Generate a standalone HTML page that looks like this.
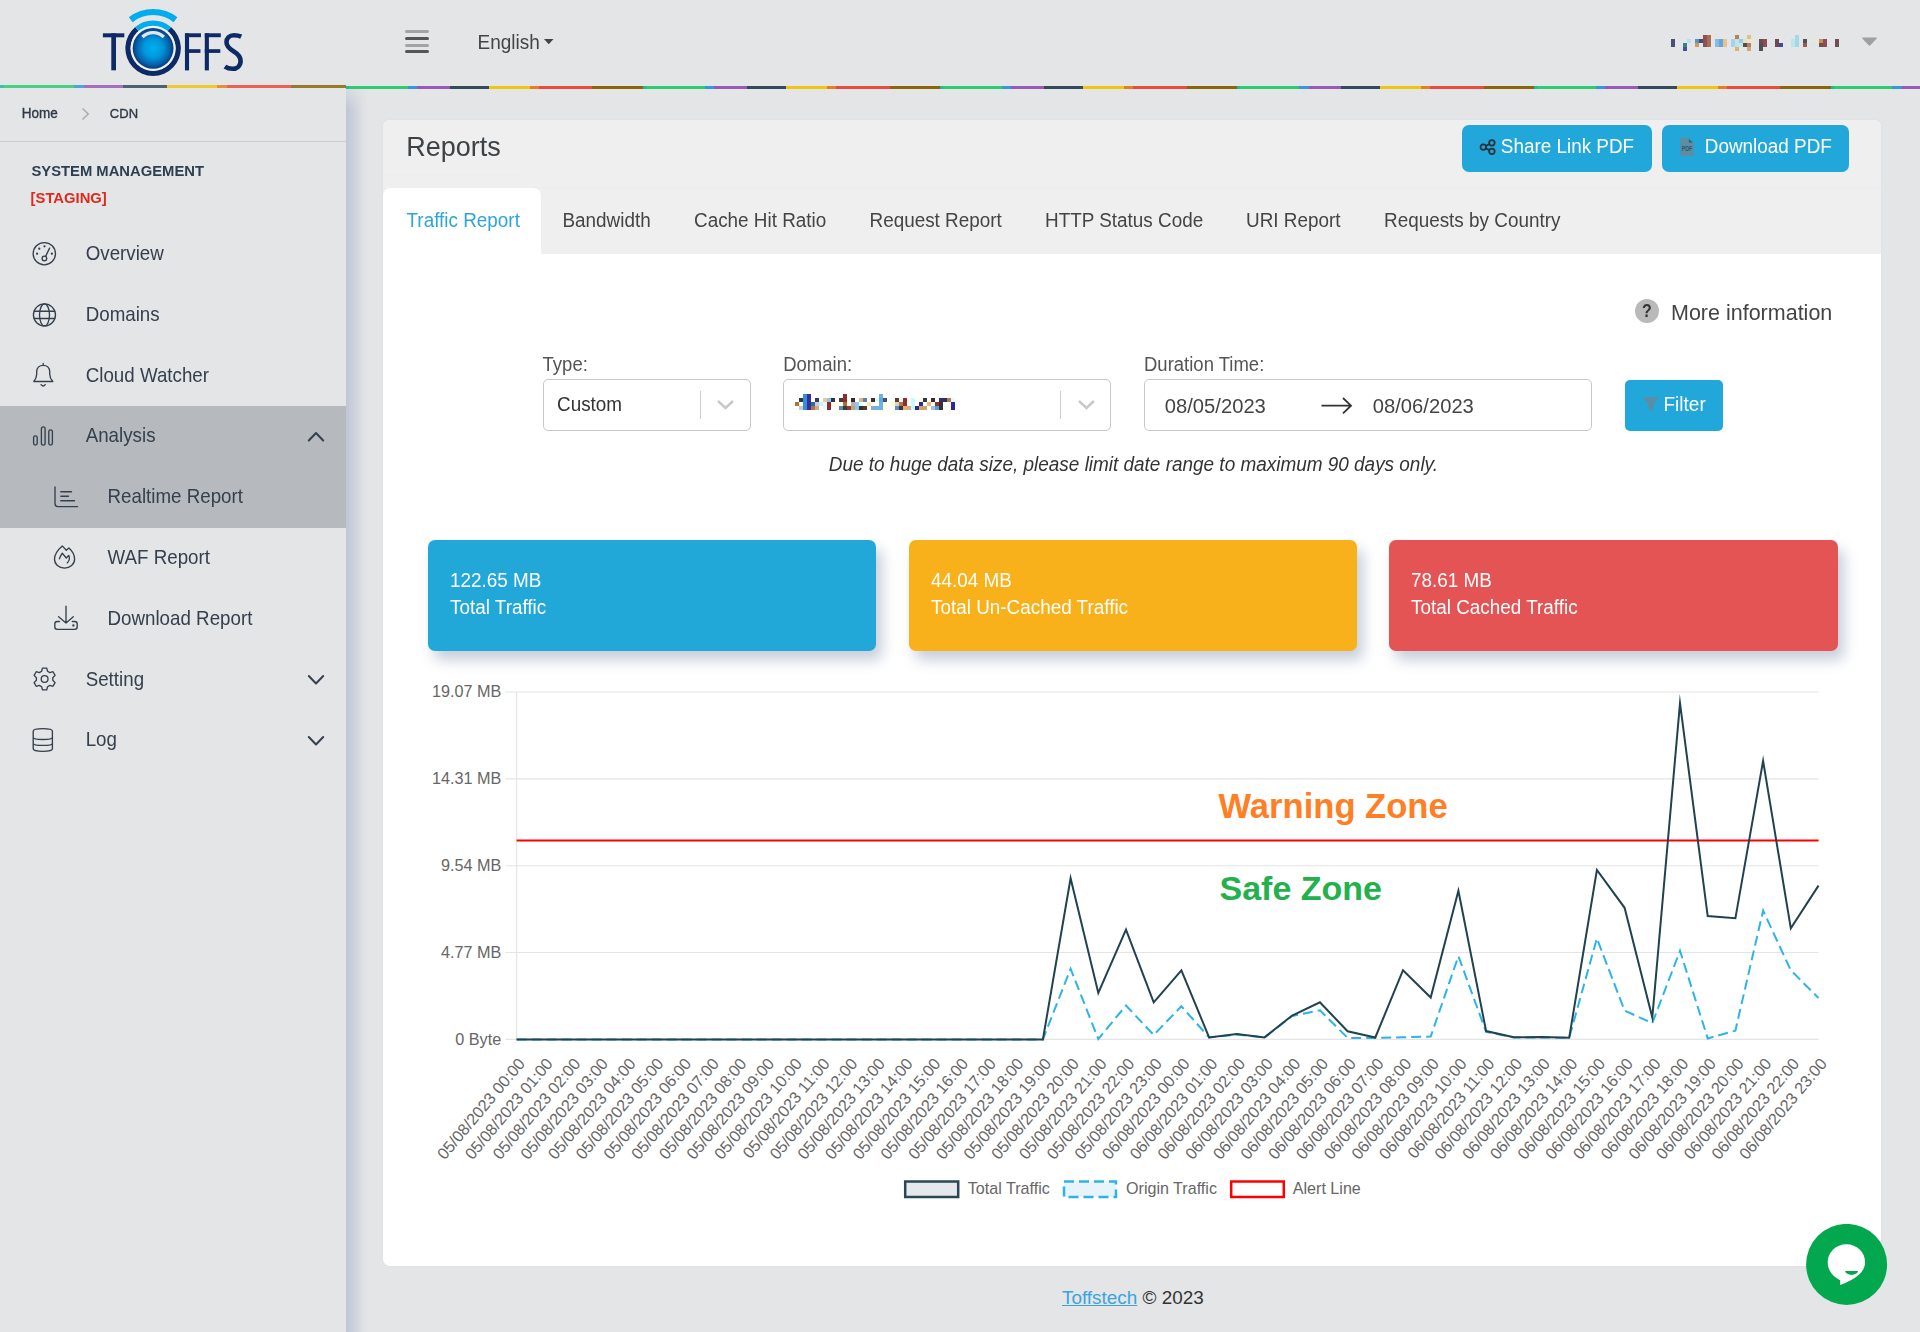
<!DOCTYPE html>
<html><head><meta charset="utf-8"><title>Reports</title>
<style>*{margin:0;padding:0;box-sizing:border-box}
html,body{width:1920px;height:1332px;overflow:hidden;background:#e4e5e7;font-family:"Liberation Sans",sans-serif;color:#333}
.abs{position:absolute}
.t{position:absolute;white-space:nowrap;line-height:1}
#sidebar{position:absolute;left:0;top:88px;width:346px;height:1244px;background:#e4e5e7}
#sbshadow{position:absolute;left:346px;top:89px;width:24px;height:1243px;background:linear-gradient(to right,#bfc5d4 0px,#c6ccd8 4px,#ccd2dc 8px,#d6d9e0 13px,#dfe0e4 17px,#e4e5e7 23px);-webkit-mask-image:linear-gradient(to bottom,rgba(0,0,0,.35) 0,#000 20px)}
.stripeL{position:absolute;left:0;top:85px;width:346px;height:3px}
.stripeR{position:absolute;left:346px;top:86px;width:1574px;height:3px}
.card{position:absolute;left:383px;top:120px;width:1498px;height:1146px;background:#fff;border-radius:7px;overflow:hidden;box-shadow:0 0 3px rgba(0,0,0,.04)}
.cardhead{position:absolute;left:0;top:0;width:1499px;height:134px;background:#efefef}
.menu{position:absolute;left:0;width:346px;height:61px}
.menu .lbl{position:absolute;font-size:18.6px;color:#34404e;white-space:nowrap;line-height:1}
.btn{position:absolute;background:#21a7d9;border-radius:7px;color:#fff}
.stat{position:absolute;top:540px;width:448px;height:111px;border-radius:7px;box-shadow:6px 9px 14px rgba(130,145,175,.45)}
.stat .v,.stat .n{position:absolute;left:22px;color:#fff;font-size:18.4px;line-height:1;white-space:nowrap}
</style></head><body>
<div id="sidebar"></div>
<div id="sbshadow"></div>
<div class="stripeL" style="opacity:.85;background:repeating-linear-gradient(to right,#1abc9c 0.00px 3.75px,#2ecc71 3.75px 73.75px,#3498db 73.75px 83.75px,#9b59b6 83.75px 122.50px,#34495e 122.50px 167.50px,#f1c40f 167.50px 217.50px,#e67e22 217.50px 227.50px,#e74c3c 227.50px 290.75px,#8b6508 290.75px 346.00px)"></div>
<div class="stripeR" style="background:repeating-linear-gradient(to right,#1abc9c 0.00px 3.00px,#2ecc71 3.00px 61.50px,#3498db 61.50px 71.50px,#9b59b6 71.50px 104.00px,#34495e 104.00px 143.00px,#f1c40f 143.00px 184.00px,#e67e22 184.00px 193.00px,#e74c3c 193.00px 246.50px,#8b6508 246.50px 297.00px)"></div>
<svg class="abs" style="left:0;top:0" width="346" height="85" viewBox="0 0 346 85"><defs><radialGradient id="sph" cx="50%" cy="50%" r="50%"><stop offset="0" stop-color="#00b0f0"/><stop offset="0.45" stop-color="#0098dc"/><stop offset="0.8" stop-color="#0862ac"/><stop offset="1" stop-color="#073c7e"/></radialGradient></defs><rect x="102.9" y="33.3" width="21.4" height="4" fill="#0d2a66"/><rect x="111.3" y="33.3" width="4.7" height="37" fill="#0d2a66"/><path d="M170.94,27.04 A27.75,27.75 0 1 1 135.26,27.04 L138.70,31.14 A22.4,22.4 0 1 0 167.50,31.14 Z" fill="#0d2a66"/><path d="M135.26,27.04 A27.75,27.75 0 0 1 170.94,27.04 L167.50,31.14 A22.4,22.4 0 0 0 138.70,31.14 Z" fill="#00adee"/><path d="M128.84,17.25 A39.4,39.4 0 0 1 177.36,17.25 L173.54,22.14 A33.2,33.2 0 0 0 132.66,22.14 Z" fill="#00adee"/><circle cx="153.1" cy="48.3" r="22.6" fill="#eef0f2"/><circle cx="153.1" cy="48.3" r="20.4" fill="url(#sph)"/><path d="M141.22,35.70 A17.1,17.1 0 0 1 164.98,35.70 L162.62,38.15 A13.7,13.7 0 0 0 143.58,38.15 Z" fill="#e2e6ea"/><rect x="184.95" y="33.3" width="4.1" height="37.1" fill="#0d2a66"/><rect x="184.95" y="33.3" width="16.0" height="3.9" fill="#0d2a66"/><rect x="184.95" y="49.2" width="15.5" height="3.7" fill="#0d2a66"/><rect x="204.8" y="33.3" width="4.1" height="37.1" fill="#0d2a66"/><rect x="204.8" y="33.3" width="16.0" height="3.9" fill="#0d2a66"/><rect x="204.8" y="49.2" width="15.5" height="3.7" fill="#0d2a66"/><path d="M241.2,36.6 C238.5,35.3 236.3,35.2 234,35.2 C229.5,35.2 226.5,38.3 226.5,42.3 C226.5,46.5 229.5,48.8 233.5,51.2 C237.8,53.8 240.6,56.3 240.6,61 C240.6,65.8 237,68.8 232.5,68.8 C229.5,68.8 227,68 224.9,66.6" fill="none" stroke="#0d2a66" stroke-width="4.6"/></svg>
<div class="abs" style="left:405px;top:30px;width:23.5px;height:3.2px;border-radius:2px;background:#a3a3a3"></div>
<div class="abs" style="left:405px;top:36.8px;width:23.5px;height:3.2px;border-radius:2px;background:#555"></div>
<div class="abs" style="left:405px;top:43.6px;width:23.5px;height:3.2px;border-radius:2px;background:#a3a3a3"></div>
<div class="abs" style="left:405px;top:50.2px;width:23.5px;height:3.2px;border-radius:2px;background:#555"></div>
<div class="t" style="left:477.50px;top:32.52px;font-size:19px;transform:scaleY(1.045);transform-origin:0 16.08px;color:#444">English</div>
<svg class="abs" style="left:543px;top:38px" width="12" height="8"><path d="M1,1 L10.5,1 L5.75,6.2 Z" fill="#444"/></svg>
<svg class="abs" style="left:1671px;top:35px" width="170" height="16"><rect x="0" y="4" width="4" height="4" fill="#4a4f7a"/><rect x="0" y="8" width="4" height="4" fill="#4a4f7a"/><rect x="12" y="8" width="4" height="4" fill="#3f8080"/><rect x="12" y="12" width="4" height="4" fill="#46519a"/><rect x="16" y="4" width="4" height="4" fill="#b5e3ea"/><rect x="24" y="4" width="4" height="4" fill="#4d95d5"/><rect x="24" y="8" width="4" height="4" fill="#d39a50"/><rect x="28" y="4" width="4" height="4" fill="#4b4e5a"/><rect x="28" y="8" width="4" height="4" fill="#dde9ea"/><rect x="32" y="0" width="4" height="4" fill="#8e4f55"/><rect x="32" y="4" width="4" height="4" fill="#8e4f55"/><rect x="32" y="8" width="4" height="4" fill="#8e4f55"/><rect x="36" y="0" width="4" height="4" fill="#a8704f"/><rect x="36" y="4" width="4" height="4" fill="#a8704f"/><rect x="36" y="8" width="4" height="4" fill="#a8704f"/><rect x="44" y="4" width="4" height="4" fill="#86bbe9"/><rect x="44" y="8" width="4" height="4" fill="#86bbe9"/><rect x="48" y="4" width="4" height="4" fill="#64a5dc"/><rect x="48" y="8" width="4" height="4" fill="#64a5dc"/><rect x="52" y="4" width="4" height="4" fill="#e8c08f"/><rect x="52" y="8" width="4" height="4" fill="#e8c08f"/><rect x="60" y="4" width="4" height="4" fill="#a5d3ea"/><rect x="60" y="8" width="4" height="4" fill="#a5d3ea"/><rect x="64" y="0" width="4" height="4" fill="#b98255"/><rect x="64" y="4" width="4" height="4" fill="#bde5e6"/><rect x="64" y="8" width="4" height="4" fill="#bde5e6"/><rect x="64" y="12" width="4" height="4" fill="#ddb07c"/><rect x="68" y="4" width="4" height="4" fill="#96cbee"/><rect x="68" y="8" width="4" height="4" fill="#c5e5e8"/><rect x="72" y="4" width="4" height="4" fill="#e9e3bd"/><rect x="72" y="8" width="4" height="4" fill="#5a4c4e"/><rect x="76" y="0" width="4" height="4" fill="#e3be8c"/><rect x="76" y="8" width="4" height="4" fill="#b0825a"/><rect x="76" y="12" width="4" height="4" fill="#d1a87c"/><rect x="80" y="4" width="4" height="4" fill="#ebe8cf"/><rect x="88" y="4" width="4" height="4" fill="#6f4a50"/><rect x="88" y="8" width="4" height="4" fill="#4d5156"/><rect x="88" y="12" width="4" height="4" fill="#4d5156"/><rect x="92" y="4" width="4" height="4" fill="#8c4e55"/><rect x="92" y="8" width="4" height="4" fill="#8c4e55"/><rect x="104" y="4" width="4" height="4" fill="#6d4a4f"/><rect x="104" y="8" width="4" height="4" fill="#6d4a4f"/><rect x="108" y="8" width="4" height="4" fill="#46499a"/><rect x="116" y="8" width="4" height="4" fill="#dfeaea"/><rect x="120" y="4" width="4" height="4" fill="#bde6e6"/><rect x="120" y="8" width="4" height="4" fill="#bde6e6"/><rect x="124" y="0" width="4" height="4" fill="#a6d6ea"/><rect x="124" y="4" width="4" height="4" fill="#a6d6ea"/><rect x="124" y="8" width="4" height="4" fill="#a6d6ea"/><rect x="132" y="4" width="4" height="4" fill="#545053"/><rect x="132" y="8" width="4" height="4" fill="#9c5b4d"/><rect x="140" y="4" width="4" height="4" fill="#e9e8cd"/><rect x="140" y="8" width="4" height="4" fill="#d8e8e8"/><rect x="148" y="4" width="4" height="4" fill="#c98f4f"/><rect x="148" y="8" width="4" height="4" fill="#734e55"/><rect x="152" y="4" width="4" height="4" fill="#8e4d55"/><rect x="152" y="8" width="4" height="4" fill="#8e4d55"/><rect x="164" y="4" width="4" height="4" fill="#724d52"/><rect x="164" y="8" width="4" height="4" fill="#724d52"/></svg>
<svg class="abs" style="left:1860px;top:36px" width="19" height="12"><path d="M3,1.5 L16,1.5 Q17.5,1.5 16.5,2.8 L10.6,9 Q9.5,10 8.4,9 L2.5,2.8 Q1.5,1.5 3,1.5 Z" fill="#9fa0a0"/></svg>
<div class="t" style="left:21.70px;top:107.07px;font-size:13.5px;transform:scaleY(1.045);transform-origin:0 11.43px;color:#2e3a48;-webkit-text-stroke:.35px #2e3a48">Home</div>
<svg class="abs" style="left:80px;top:106px" width="12" height="15"><path d="M2.5,2.5 L8.2,8 L2.5,13.5" fill="none" stroke="#a9a9a9" stroke-width="1.4"/></svg>
<div class="t" style="left:109.80px;top:106.90px;font-size:13.0px;transform:scaleY(1.045);transform-origin:0 11.00px;color:#2e3a48;-webkit-text-stroke:.35px #2e3a48;letter-spacing:.1px">CDN</div>
<div class="abs" style="left:0px;top:141px;width:346px;height:1.2px;background:#cbcccf"></div>
<div class="t" style="left:31.40px;top:164.47px;font-size:14.8px;transform:scaleY(1.045);transform-origin:0 12.53px;color:#2c3e50;font-weight:bold">SYSTEM MANAGEMENT</div>
<div class="t" style="left:30.60px;top:191.47px;font-size:14.8px;transform:scaleY(1.045);transform-origin:0 12.53px;color:#e0281b;font-weight:bold">[STAGING]</div>
<div class="abs" style="left:0px;top:406px;width:346px;height:122px;background:#b6babe"></div>
<svg class="abs" style="left:0;top:0;overflow:visible" width="346" height="1332"><g fill="none" stroke="#34404e" stroke-width="1.35" stroke-linecap="round" stroke-linejoin="round"><circle cx="44.3" cy="253.7" r="11.15"/><circle cx="39.3" cy="248.7" r="0.55" fill="#34404e" stroke-width="1.1"/><circle cx="44.5" cy="246.3" r="0.55" fill="#34404e" stroke-width="1.1"/><circle cx="37.1" cy="253.7" r="0.55" fill="#34404e" stroke-width="1.1"/><circle cx="51.9" cy="253.7" r="0.55" fill="#34404e" stroke-width="1.1"/><circle cx="44.4" cy="258.4" r="2.3"/><path d="M45.6,256.4 L49.6,248.1"/><circle cx="44.45" cy="314.9" r="11.0"/><ellipse cx="44.5" cy="314.9" rx="5.0" ry="11.0"/><path d="M34.2,311.2 H54.8 M34.2,318.5 H54.8"/><path d="M33.8,381.5 L52.8,381.5 C51.6,380.2 49.7,378 49.7,374 L49.7,371.6 C49.7,367.8 46.9,365.3 43.2,365.3 C39.5,365.3 36.7,367.8 36.7,371.6 L36.7,374 C36.7,378 34.9,380.2 33.8,381.5 Z M43.2,363.3 V365.2 M41.1,384.6 Q43.1,387.4 45.2,384.6"/><rect x="33.6" y="435.8" width="3.6" height="9.3" rx="1.8"/><rect x="41.4" y="426.8" width="3.7" height="18.3" rx="1.85"/><rect x="48.8" y="429.8" width="3.6" height="15.3" rx="1.8"/><path d="M55,487 V503.8 Q55,506.6 57.8,506.6 H77.6 M60.8,491.7 H71.5 M60.8,496.2 H68.5 M60.8,500.7 H74.5"/><path d="M62.25,545.9 L66.3,550.2 L68.9,547.9 C72.4,551 74.6,555 74.6,559 C74.6,564.4 70,568.1 64.5,568.1 C58.8,568.1 54.5,564.4 54.5,559 C54.5,553.8 58,549.6 62.25,545.9 Z M59.4,558.8 C60.2,556.6 61,554.8 62.3,553.2 L66.3,558 L68.7,555.4 C69.9,557.9 69.6,560.6 67.3,562.9"/><path d="M66,606.2 V622.8 M58.6,616.8 L66,623 L73.3,616.8 M59.5,621.5 H57.2 Q54.8,621.5 54.8,624 V626.8 Q54.8,629.3 57.2,629.3 H74.8 Q77.2,629.3 77.2,626.8 V624 Q77.2,621.5 74.8,621.5 H72.3"/><circle cx="73.4" cy="625.4" r="0.5" fill="#34404e"/><path d="M41.63,671.25 L42.48,668.10 L46.72,668.10 L47.57,671.25 L49.82,672.55 L52.98,671.72 L55.10,675.39 L52.80,677.70 L52.80,680.30 L55.10,682.61 L52.98,686.28 L49.82,685.45 L47.57,686.75 L46.72,689.90 L42.48,689.90 L41.63,686.75 L39.38,685.45 L36.22,686.28 L34.10,682.61 L36.40,680.30 L36.40,677.70 L34.10,675.39 L36.22,671.72 L39.38,672.55 Z"/><circle cx="44.6" cy="679.0" r="3.4"/><path d="M33.2,731.2 C33.2,729.5 37.5,728.6 42.8,728.6 C48.1,728.6 52.4,729.5 52.4,731.2 V748.8 C52.4,750.5 48.1,751.3 42.8,751.3 C37.5,751.3 33.2,750.5 33.2,748.8 Z M33.2,737.2 C33.2,738.8 37.5,739.5 42.8,739.5 C48.1,739.5 52.4,738.8 52.4,737.2 M33.2,743.2 C33.2,744.8 37.5,745.4 42.8,745.4 C48.1,745.4 52.4,744.8 52.4,743.2"/></g></svg>
<svg class="abs" style="left:0;top:0;overflow:visible" width="346" height="1332"><g fill="none" stroke="#34404e" stroke-width="2" stroke-linecap="round" stroke-linejoin="round"><path d="M308.8,440.5 L316,433 L323.2,440.5"/><path d="M308.8,676 L316,683.5 L323.2,676"/><path d="M308.8,737 L316,744.5 L323.2,737"/></g></svg>
<div class="t" style="left:85.70px;top:245.03px;font-size:18.75px;transform:scaleY(1.045);transform-origin:0 15.87px;color:#34404e">Overview</div>
<div class="t" style="left:85.70px;top:305.83px;font-size:18.75px;transform:scaleY(1.045);transform-origin:0 15.87px;color:#34404e">Domains</div>
<div class="t" style="left:85.70px;top:366.63px;font-size:18.75px;transform:scaleY(1.045);transform-origin:0 15.87px;color:#34404e">Cloud Watcher</div>
<div class="t" style="left:85.70px;top:427.43px;font-size:18.75px;transform:scaleY(1.045);transform-origin:0 15.87px;color:#34404e">Analysis</div>
<div class="t" style="left:107.50px;top:488.23px;font-size:18.75px;transform:scaleY(1.045);transform-origin:0 15.87px;color:#34404e">Realtime Report</div>
<div class="t" style="left:107.50px;top:549.03px;font-size:18.75px;transform:scaleY(1.045);transform-origin:0 15.87px;color:#34404e">WAF Report</div>
<div class="t" style="left:107.50px;top:609.83px;font-size:18.75px;transform:scaleY(1.045);transform-origin:0 15.87px;color:#34404e">Download Report</div>
<div class="t" style="left:85.70px;top:670.63px;font-size:18.75px;transform:scaleY(1.045);transform-origin:0 15.87px;color:#34404e">Setting</div>
<div class="t" style="left:85.70px;top:731.43px;font-size:18.75px;transform:scaleY(1.045);transform-origin:0 15.87px;color:#34404e">Log</div>
<div class="card"><div class="cardhead"></div></div>
<div class="abs" style="left:383px;top:175px;width:139px;height:1px;background:#ebeeef"></div>
<div class="abs" style="left:534px;top:187px;width:1348px;height:1px;background:#eaedf1"></div>
<div class="abs" style="left:383px;top:188px;width:158px;height:70px;background:#fff;border-radius:8px 8px 0 0"></div>
<div class="t" style="left:406.30px;top:134.44px;font-size:27px;transform:scaleY(1.045);transform-origin:0 22.86px;color:#3d4246">Reports</div>
<div class="t" style="left:406.50px;top:211.60px;font-size:18.9px;transform:scaleY(1.045);transform-origin:0 16.00px;color:#2ea5da">Traffic Report</div>
<div class="t" style="left:562.50px;top:211.60px;font-size:18.9px;transform:scaleY(1.045);transform-origin:0 16.00px;color:#444">Bandwidth</div>
<div class="t" style="left:694.00px;top:211.60px;font-size:18.9px;transform:scaleY(1.045);transform-origin:0 16.00px;color:#444">Cache Hit Ratio</div>
<div class="t" style="left:869.50px;top:211.60px;font-size:18.9px;transform:scaleY(1.045);transform-origin:0 16.00px;color:#444">Request Report</div>
<div class="t" style="left:1045.00px;top:211.60px;font-size:18.9px;transform:scaleY(1.045);transform-origin:0 16.00px;color:#444">HTTP Status Code</div>
<div class="t" style="left:1246.00px;top:211.60px;font-size:18.9px;transform:scaleY(1.045);transform-origin:0 16.00px;color:#444">URI Report</div>
<div class="t" style="left:1384.00px;top:211.60px;font-size:18.9px;transform:scaleY(1.045);transform-origin:0 16.00px;color:#444">Requests by Country</div>
<div class="btn" style="left:1462px;top:125px;width:190px;height:47px"></div>
<div class="btn" style="left:1662px;top:125px;width:187px;height:47px"></div>
<div class="t" style="left:1500.80px;top:137.80px;font-size:18.9px;transform:scaleY(1.045);transform-origin:0 16.00px;color:#fff">Share Link PDF</div>
<div class="t" style="left:1704.80px;top:137.80px;font-size:18.9px;transform:scaleY(1.045);transform-origin:0 16.00px;color:#fff">Download PDF</div>
<svg class="abs" style="left:1476px;top:136px;overflow:visible" width="24" height="22"><g fill="none" stroke="#2b3138" stroke-width="1.75"><circle cx="7.3" cy="11.1" r="2.75"/><circle cx="15.9" cy="6.8" r="2.75"/><circle cx="15.9" cy="15.3" r="2.75"/><path d="M9.8,9.9 L13.4,8 M9.8,12.4 L13.4,14.1"/></g></svg>
<svg class="abs" style="left:1679px;top:136px" width="17" height="21"><path d="M2.6,1.4 H9.1 L14.8,7.4 V18.3 Q14.8,19.9 13.2,19.9 H2.7 Q1.1,19.9 1.1,18.3 V3 Q1.1,1.4 2.6,1.4 Z" fill="#5a8ea5"/><path d="M9.9,3.2 L13.9,6.6 H9.9 Z" fill="#3b5a68"/><text x="0" y="0" transform="translate(8,15.2) scale(.72,1)" font-family="Liberation Sans" font-size="7.4" font-weight="bold" fill="#33546a" text-anchor="middle">PDF</text></svg>
<div class="abs" style="left:1635px;top:299px;width:24px;height:24px;border-radius:50%;background:#b9b9b9"></div>
<div class="t" style="left:1641.80px;top:303.13px;font-size:17.8px;color:#333;font-weight:bold;transform:scaleX(.9);transform-origin:left">?</div>
<div class="t" style="left:1671.00px;top:302.60px;font-size:21.5px;transform:scaleY(1.045);transform-origin:0 18.20px;color:#444">More information</div>
<div class="t" style="left:542.60px;top:355.64px;font-size:18.5px;transform:scaleY(1.045);transform-origin:0 15.66px;color:#555">Type:</div>
<div class="t" style="left:783.20px;top:355.64px;font-size:18.5px;transform:scaleY(1.045);transform-origin:0 15.66px;color:#555">Domain:</div>
<div class="t" style="left:1144.00px;top:355.64px;font-size:18.5px;transform:scaleY(1.045);transform-origin:0 15.66px;color:#555">Duration Time:</div>
<div class="abs" style="left:543px;top:379px;width:208px;height:52px;border:1px solid #c8c8c8;border-radius:5px;background:#fff"></div>
<div class="t" style="left:557.00px;top:396.20px;font-size:18.9px;transform:scaleY(1.045);transform-origin:0 16.00px;color:#333">Custom</div>
<div class="abs" style="left:700px;top:391px;width:1.3px;height:28px;background:#ccc"></div>
<svg class="abs" style="left:714px;top:398px" width="24" height="14"><path d="M4,3 L11.5,10 L19,3" fill="none" stroke="#c8c8c8" stroke-width="2.4"/></svg>
<div class="abs" style="left:783px;top:379px;width:328px;height:52px;border:1px solid #c8c8c8;border-radius:5px;background:#fff"></div>
<div class="abs" style="left:1060px;top:391px;width:1.3px;height:28px;background:#ccc"></div>
<svg class="abs" style="left:1075px;top:398px" width="24" height="14"><path d="M4,3 L11.5,10 L19,3" fill="none" stroke="#c8c8c8" stroke-width="2.4"/></svg>
<svg class="abs" style="left:795px;top:394px" width="160" height="16"><rect x="0" y="8" width="4" height="4" fill="#b8702f"/><rect x="4" y="4" width="4" height="4" fill="#35353d"/><rect x="4" y="12" width="4" height="4" fill="#c9cac5"/><rect x="8" y="0" width="4" height="4" fill="#3290d6"/><rect x="8" y="4" width="4" height="4" fill="#3290d6"/><rect x="8" y="8" width="4" height="4" fill="#3290d6"/><rect x="8" y="12" width="4" height="4" fill="#3290d6"/><rect x="12" y="0" width="4" height="4" fill="#353099"/><rect x="12" y="4" width="4" height="4" fill="#353099"/><rect x="12" y="8" width="4" height="4" fill="#353099"/><rect x="12" y="12" width="4" height="4" fill="#353099"/><rect x="16" y="8" width="4" height="4" fill="#2f6aa8"/><rect x="16" y="12" width="4" height="4" fill="#b8703a"/><rect x="20" y="4" width="4" height="4" fill="#2d3f58"/><rect x="20" y="8" width="4" height="4" fill="#cfcdd2"/><rect x="20" y="12" width="4" height="4" fill="#c8ad8f"/><rect x="24" y="8" width="4" height="4" fill="#c2f6fa"/><rect x="28" y="4" width="4" height="4" fill="#edc89a"/><rect x="28" y="8" width="4" height="4" fill="#e5fbfd"/><rect x="28" y="12" width="4" height="4" fill="#e5fbfd"/><rect x="32" y="4" width="4" height="4" fill="#8dc3ec"/><rect x="32" y="8" width="4" height="4" fill="#8f2a2a"/><rect x="32" y="12" width="4" height="4" fill="#8f2a2a"/><rect x="36" y="4" width="4" height="4" fill="#333536"/><rect x="40" y="8" width="4" height="4" fill="#fffde6"/><rect x="44" y="4" width="4" height="4" fill="#4d3a2d"/><rect x="44" y="12" width="4" height="4" fill="#5a8ab8"/><rect x="48" y="0" width="4" height="4" fill="#902b2e"/><rect x="48" y="4" width="4" height="4" fill="#902b2e"/><rect x="48" y="8" width="4" height="4" fill="#b86a2a"/><rect x="48" y="12" width="4" height="4" fill="#33403a"/><rect x="52" y="12" width="4" height="4" fill="#973833"/><rect x="56" y="4" width="4" height="4" fill="#2c2e30"/><rect x="56" y="8" width="4" height="4" fill="#c4ada0"/><rect x="56" y="12" width="4" height="4" fill="#b5a886"/><rect x="60" y="8" width="4" height="4" fill="#8fc9f3"/><rect x="60" y="12" width="4" height="4" fill="#89c4f2"/><rect x="64" y="4" width="4" height="4" fill="#dcb587"/><rect x="64" y="8" width="4" height="4" fill="#e6fdfd"/><rect x="64" y="12" width="4" height="4" fill="#2d3038"/><rect x="68" y="4" width="4" height="4" fill="#5f7fb0"/><rect x="68" y="12" width="4" height="4" fill="#5b3828"/><rect x="72" y="8" width="4" height="4" fill="#fde5aa"/><rect x="76" y="4" width="4" height="4" fill="#3d3128"/><rect x="76" y="12" width="4" height="4" fill="#8eaac2"/><rect x="80" y="4" width="4" height="4" fill="#ecfcff"/><rect x="80" y="12" width="4" height="4" fill="#6cb1ee"/><rect x="84" y="0" width="4" height="4" fill="#6cb0ee"/><rect x="84" y="4" width="4" height="4" fill="#63a6d8"/><rect x="84" y="8" width="4" height="4" fill="#6cb0ee"/><rect x="84" y="12" width="4" height="4" fill="#6cb0ee"/><rect x="88" y="4" width="4" height="4" fill="#3d5480"/><rect x="88" y="8" width="4" height="4" fill="#fffde0"/><rect x="88" y="12" width="4" height="4" fill="#fffde0"/><rect x="96" y="8" width="4" height="4" fill="#fffbc5"/><rect x="100" y="4" width="4" height="4" fill="#5e3a29"/><rect x="100" y="8" width="4" height="4" fill="#d4d2d6"/><rect x="100" y="12" width="4" height="4" fill="#5d8cb5"/><rect x="104" y="4" width="4" height="4" fill="#e5fbff"/><rect x="104" y="8" width="4" height="4" fill="#b27d32"/><rect x="104" y="12" width="4" height="4" fill="#31345a"/><rect x="108" y="4" width="4" height="4" fill="#962c2e"/><rect x="108" y="8" width="4" height="4" fill="#962c2e"/><rect x="108" y="12" width="4" height="4" fill="#eab064"/><rect x="112" y="12" width="4" height="4" fill="#cdb08b"/><rect x="116" y="4" width="4" height="4" fill="#c9fbfc"/><rect x="116" y="8" width="4" height="4" fill="#c9fbfc"/><rect x="116" y="12" width="4" height="4" fill="#c9fbfc"/><rect x="120" y="12" width="4" height="4" fill="#2a2a98"/><rect x="124" y="4" width="4" height="4" fill="#fff9ea"/><rect x="124" y="8" width="4" height="4" fill="#2f2c9a"/><rect x="124" y="12" width="4" height="4" fill="#de9b5b"/><rect x="128" y="4" width="4" height="4" fill="#2c3a46"/><rect x="128" y="12" width="4" height="4" fill="#c0a47a"/><rect x="132" y="8" width="4" height="4" fill="#f0b56b"/><rect x="136" y="4" width="4" height="4" fill="#3b2a2a"/><rect x="136" y="12" width="4" height="4" fill="#a6c0d8"/><rect x="140" y="8" width="4" height="4" fill="#972d2d"/><rect x="140" y="12" width="4" height="4" fill="#4c9ee6"/><rect x="144" y="4" width="4" height="4" fill="#2f2b7a"/><rect x="144" y="8" width="4" height="4" fill="#333333"/><rect x="144" y="12" width="4" height="4" fill="#333333"/><rect x="148" y="4" width="4" height="4" fill="#2f3348"/><rect x="152" y="4" width="4" height="4" fill="#b07a5a"/><rect x="156" y="4" width="4" height="4" fill="#e5fcff"/><rect x="156" y="8" width="4" height="4" fill="#2d2a95"/><rect x="156" y="12" width="4" height="4" fill="#2d2a95"/></svg>
<div class="abs" style="left:1144px;top:379px;width:448px;height:52px;border:1px solid #c8c8c8;border-radius:5px;background:#fff"></div>
<div class="t" style="left:1164.80px;top:396.10px;font-size:20.2px;transform:scaleY(1.045);transform-origin:0 17.10px;color:#444">08/05/2023</div>
<div class="t" style="left:1372.80px;top:396.10px;font-size:20.2px;transform:scaleY(1.045);transform-origin:0 17.10px;color:#444">08/06/2023</div>
<svg class="abs" style="left:1318px;top:394px" width="38" height="24"><path d="M3.5,11.7 H33 M25,4 L33,11.7 L25,19.4" fill="none" stroke="#333" stroke-width="1.8"/></svg>
<div class="btn" style="left:1625px;top:380px;width:98px;height:51px;border-radius:5px"></div>
<svg class="abs" style="left:1641.5px;top:395.5px" width="20" height="17"><path d="M1.2,2.2 Q0.6,1 2,1 H15.6 Q17,1 16.4,2.2 L11.2,8.6 V14.6 Q11.2,15.8 10.2,15.2 L7.4,13.2 Q6.4,12.5 6.4,11.6 V8.6 Z" fill="#5b8ea5"/></svg>
<div class="t" style="left:1663.50px;top:395.22px;font-size:19px;transform:scaleY(1.045);transform-origin:0 16.08px;color:#fff">Filter</div>
<div class="t" style="left:828.80px;top:456.46px;font-size:18.95px;transform:scaleY(1.045);transform-origin:0 16.04px;color:#333;font-style:italic">Due to huge data size, please limit date range to maximum 90 days only.</div>
<div class="stat" style="left:428px;background:#22a7d9;width:448px"></div>
<div class="t" style="left:450.00px;top:571.60px;font-size:18.9px;transform:scaleY(1.045);transform-origin:0 16.00px;color:#fff">122.65 MB</div>
<div class="t" style="left:450.00px;top:599.40px;font-size:18.9px;transform:scaleY(1.045);transform-origin:0 16.00px;color:#fff">Total Traffic</div>
<div class="stat" style="left:909px;background:#f8b11a;width:448px"></div>
<div class="t" style="left:931.00px;top:571.60px;font-size:18.9px;transform:scaleY(1.045);transform-origin:0 16.00px;color:#fff">44.04 MB</div>
<div class="t" style="left:931.00px;top:599.40px;font-size:18.9px;transform:scaleY(1.045);transform-origin:0 16.00px;color:#fff">Total Un-Cached Traffic</div>
<div class="stat" style="left:1389px;background:#e45454;width:449px"></div>
<div class="t" style="left:1411.00px;top:571.60px;font-size:18.9px;transform:scaleY(1.045);transform-origin:0 16.00px;color:#fff">78.61 MB</div>
<div class="t" style="left:1411.00px;top:599.40px;font-size:18.9px;transform:scaleY(1.045);transform-origin:0 16.00px;color:#fff">Total Cached Traffic</div>
<svg class="abs" style="left:0;top:0;overflow:visible;font-family:'Liberation Sans',sans-serif" width="1920" height="1332"><path d="M505.5,692.00 H1818.6" stroke="#e4e4e4" stroke-width="1.1"/><path d="M505.5,778.85 H1818.6" stroke="#e4e4e4" stroke-width="1.1"/><path d="M505.5,865.70 H1818.6" stroke="#e4e4e4" stroke-width="1.1"/><path d="M505.5,952.55 H1818.6" stroke="#e4e4e4" stroke-width="1.1"/><path d="M505.5,1039.40 H1818.6" stroke="#e4e4e4" stroke-width="1.1"/><path d="M516.6,692.0 V1039.4" stroke="#e4e4e4" stroke-width="1.1"/><text x="501.2" y="697.30" text-anchor="end" font-size="16.2" fill="#666">19.07 MB</text><text x="501.2" y="784.15" text-anchor="end" font-size="16.2" fill="#666">14.31 MB</text><text x="501.2" y="871.00" text-anchor="end" font-size="16.2" fill="#666">9.54 MB</text><text x="501.2" y="957.85" text-anchor="end" font-size="16.2" fill="#666">4.77 MB</text><text x="501.2" y="1044.70" text-anchor="end" font-size="16.2" fill="#666">0 Byte</text><path d="M516.6,840.6 H1818.6" stroke="#ff0000" stroke-width="2"/><text x="1218.5" y="817.8" font-size="34.6" font-weight="bold" fill="#ff7f27">Warning Zone</text><text x="1219.5" y="899.5" font-size="34" font-weight="bold" fill="#22b14c">Safe Zone</text><polyline points="516.60,1039.40 544.30,1039.40 572.00,1039.40 599.70,1039.40 627.40,1039.40 655.10,1039.40 682.80,1039.40 710.50,1039.40 738.20,1039.40 765.90,1039.40 793.60,1039.40 821.30,1039.40 849.00,1039.40 876.70,1039.40 904.40,1039.40 932.10,1039.40 959.80,1039.40 987.50,1039.40 1015.20,1039.40 1042.90,1039.40 1070.60,968.75 1098.30,1039.00 1126.00,1005.50 1153.70,1035.00 1181.40,1006.25 1209.10,1037.40 1236.80,1034.50 1264.50,1037.50 1292.20,1016.00 1319.90,1010.30 1347.60,1037.90 1375.30,1037.90 1403.00,1037.30 1430.70,1036.60 1458.40,956.20 1486.10,1031.90 1513.80,1037.50 1541.50,1037.50 1569.20,1037.80 1596.90,938.40 1624.60,1010.60 1652.30,1023.10 1680.00,950.80 1707.70,1038.40 1735.40,1030.60 1763.10,910.60 1790.80,970.30 1818.50,998.00" fill="none" stroke="#2db3ea" stroke-width="2" stroke-dasharray="10 5"/><polyline points="516.60,1039.40 544.30,1039.40 572.00,1039.40 599.70,1039.40 627.40,1039.40 655.10,1039.40 682.80,1039.40 710.50,1039.40 738.20,1039.40 765.90,1039.40 793.60,1039.40 821.30,1039.40 849.00,1039.40 876.70,1039.40 904.40,1039.40 932.10,1039.40 959.80,1039.40 987.50,1039.40 1015.20,1039.40 1042.90,1039.40 1070.60,878.30 1098.30,993.00 1126.00,929.70 1153.70,1002.30 1181.40,970.30 1209.10,1037.40 1236.80,1034.00 1264.50,1037.40 1292.20,1015.50 1319.90,1002.30 1347.60,1031.30 1375.30,1037.50 1403.00,970.20 1430.70,997.50 1458.40,890.80 1486.10,1031.10 1513.80,1037.30 1541.50,1037.00 1569.20,1037.80 1596.90,870.00 1624.60,907.80 1652.30,1017.50 1680.00,703.20 1707.70,916.10 1735.40,918.30 1763.10,760.90 1790.80,928.40 1818.50,885.60" fill="none" stroke="#21424f" stroke-width="2" stroke-linejoin="miter" stroke-miterlimit="10"/><text transform="translate(525.80,1064) rotate(-50)" text-anchor="end" font-size="16.2" fill="#666">05/08/2023 00:00</text><text transform="translate(553.50,1064) rotate(-50)" text-anchor="end" font-size="16.2" fill="#666">05/08/2023 01:00</text><text transform="translate(581.20,1064) rotate(-50)" text-anchor="end" font-size="16.2" fill="#666">05/08/2023 02:00</text><text transform="translate(608.90,1064) rotate(-50)" text-anchor="end" font-size="16.2" fill="#666">05/08/2023 03:00</text><text transform="translate(636.60,1064) rotate(-50)" text-anchor="end" font-size="16.2" fill="#666">05/08/2023 04:00</text><text transform="translate(664.30,1064) rotate(-50)" text-anchor="end" font-size="16.2" fill="#666">05/08/2023 05:00</text><text transform="translate(692.00,1064) rotate(-50)" text-anchor="end" font-size="16.2" fill="#666">05/08/2023 06:00</text><text transform="translate(719.70,1064) rotate(-50)" text-anchor="end" font-size="16.2" fill="#666">05/08/2023 07:00</text><text transform="translate(747.40,1064) rotate(-50)" text-anchor="end" font-size="16.2" fill="#666">05/08/2023 08:00</text><text transform="translate(775.10,1064) rotate(-50)" text-anchor="end" font-size="16.2" fill="#666">05/08/2023 09:00</text><text transform="translate(802.80,1064) rotate(-50)" text-anchor="end" font-size="16.2" fill="#666">05/08/2023 10:00</text><text transform="translate(830.50,1064) rotate(-50)" text-anchor="end" font-size="16.2" fill="#666">05/08/2023 11:00</text><text transform="translate(858.20,1064) rotate(-50)" text-anchor="end" font-size="16.2" fill="#666">05/08/2023 12:00</text><text transform="translate(885.90,1064) rotate(-50)" text-anchor="end" font-size="16.2" fill="#666">05/08/2023 13:00</text><text transform="translate(913.60,1064) rotate(-50)" text-anchor="end" font-size="16.2" fill="#666">05/08/2023 14:00</text><text transform="translate(941.30,1064) rotate(-50)" text-anchor="end" font-size="16.2" fill="#666">05/08/2023 15:00</text><text transform="translate(969.00,1064) rotate(-50)" text-anchor="end" font-size="16.2" fill="#666">05/08/2023 16:00</text><text transform="translate(996.70,1064) rotate(-50)" text-anchor="end" font-size="16.2" fill="#666">05/08/2023 17:00</text><text transform="translate(1024.40,1064) rotate(-50)" text-anchor="end" font-size="16.2" fill="#666">05/08/2023 18:00</text><text transform="translate(1052.10,1064) rotate(-50)" text-anchor="end" font-size="16.2" fill="#666">05/08/2023 19:00</text><text transform="translate(1079.80,1064) rotate(-50)" text-anchor="end" font-size="16.2" fill="#666">05/08/2023 20:00</text><text transform="translate(1107.50,1064) rotate(-50)" text-anchor="end" font-size="16.2" fill="#666">05/08/2023 21:00</text><text transform="translate(1135.20,1064) rotate(-50)" text-anchor="end" font-size="16.2" fill="#666">05/08/2023 22:00</text><text transform="translate(1162.90,1064) rotate(-50)" text-anchor="end" font-size="16.2" fill="#666">05/08/2023 23:00</text><text transform="translate(1190.60,1064) rotate(-50)" text-anchor="end" font-size="16.2" fill="#666">06/08/2023 00:00</text><text transform="translate(1218.30,1064) rotate(-50)" text-anchor="end" font-size="16.2" fill="#666">06/08/2023 01:00</text><text transform="translate(1246.00,1064) rotate(-50)" text-anchor="end" font-size="16.2" fill="#666">06/08/2023 02:00</text><text transform="translate(1273.70,1064) rotate(-50)" text-anchor="end" font-size="16.2" fill="#666">06/08/2023 03:00</text><text transform="translate(1301.40,1064) rotate(-50)" text-anchor="end" font-size="16.2" fill="#666">06/08/2023 04:00</text><text transform="translate(1329.10,1064) rotate(-50)" text-anchor="end" font-size="16.2" fill="#666">06/08/2023 05:00</text><text transform="translate(1356.80,1064) rotate(-50)" text-anchor="end" font-size="16.2" fill="#666">06/08/2023 06:00</text><text transform="translate(1384.50,1064) rotate(-50)" text-anchor="end" font-size="16.2" fill="#666">06/08/2023 07:00</text><text transform="translate(1412.20,1064) rotate(-50)" text-anchor="end" font-size="16.2" fill="#666">06/08/2023 08:00</text><text transform="translate(1439.90,1064) rotate(-50)" text-anchor="end" font-size="16.2" fill="#666">06/08/2023 09:00</text><text transform="translate(1467.60,1064) rotate(-50)" text-anchor="end" font-size="16.2" fill="#666">06/08/2023 10:00</text><text transform="translate(1495.30,1064) rotate(-50)" text-anchor="end" font-size="16.2" fill="#666">06/08/2023 11:00</text><text transform="translate(1523.00,1064) rotate(-50)" text-anchor="end" font-size="16.2" fill="#666">06/08/2023 12:00</text><text transform="translate(1550.70,1064) rotate(-50)" text-anchor="end" font-size="16.2" fill="#666">06/08/2023 13:00</text><text transform="translate(1578.40,1064) rotate(-50)" text-anchor="end" font-size="16.2" fill="#666">06/08/2023 14:00</text><text transform="translate(1606.10,1064) rotate(-50)" text-anchor="end" font-size="16.2" fill="#666">06/08/2023 15:00</text><text transform="translate(1633.80,1064) rotate(-50)" text-anchor="end" font-size="16.2" fill="#666">06/08/2023 16:00</text><text transform="translate(1661.50,1064) rotate(-50)" text-anchor="end" font-size="16.2" fill="#666">06/08/2023 17:00</text><text transform="translate(1689.20,1064) rotate(-50)" text-anchor="end" font-size="16.2" fill="#666">06/08/2023 18:00</text><text transform="translate(1716.90,1064) rotate(-50)" text-anchor="end" font-size="16.2" fill="#666">06/08/2023 19:00</text><text transform="translate(1744.60,1064) rotate(-50)" text-anchor="end" font-size="16.2" fill="#666">06/08/2023 20:00</text><text transform="translate(1772.30,1064) rotate(-50)" text-anchor="end" font-size="16.2" fill="#666">06/08/2023 21:00</text><text transform="translate(1800.00,1064) rotate(-50)" text-anchor="end" font-size="16.2" fill="#666">06/08/2023 22:00</text><text transform="translate(1827.70,1064) rotate(-50)" text-anchor="end" font-size="16.2" fill="#666">06/08/2023 23:00</text><rect x="905.2" y="1181.5" width="53" height="15.5" fill="#e6e9eb" stroke="#2a4756" stroke-width="2.5"/><text x="967.8" y="1194.4" font-size="16.1" fill="#666">Total Traffic</text><rect x="1064" y="1181.5" width="52" height="15.5" fill="#e8f4fb" stroke="#2fb2ea" stroke-width="2.5" stroke-dasharray="10 5"/><text x="1126" y="1194.4" font-size="16.1" fill="#666">Origin Traffic</text><rect x="1231.2" y="1181.5" width="52.6" height="15.5" fill="#fff" stroke="#ff0000" stroke-width="2.5"/><text x="1292.8" y="1194.4" font-size="16.1" fill="#666">Alert Line</text></svg>
<div class="t" style="left:1062px;top:1289px;font-size:18.9px"><span style="color:#3ba4dc;text-decoration:underline">Toffstech</span><span style="color:#333"> © 2023</span></div>
<svg class="abs" style="left:1806px;top:1224px" width="82" height="82"><circle cx="40.6" cy="40.4" r="40.5" fill="#03a84e"/><path d="M40.4,20.3 C50.8,20.3 59.1,28.3 59.1,38 C59.1,48.5 49.6,54.8 34.2,61.1 L34.2,56.3 C27,52.8 21.7,46.5 21.7,38.2 C21.7,28.4 30,20.3 40.4,20.3 Z" fill="#fff"/><path d="M39,47.1 C40.2,52.2 51,52.2 52.2,47.1 Z" fill="#03a84e"/></svg>
</body></html>
